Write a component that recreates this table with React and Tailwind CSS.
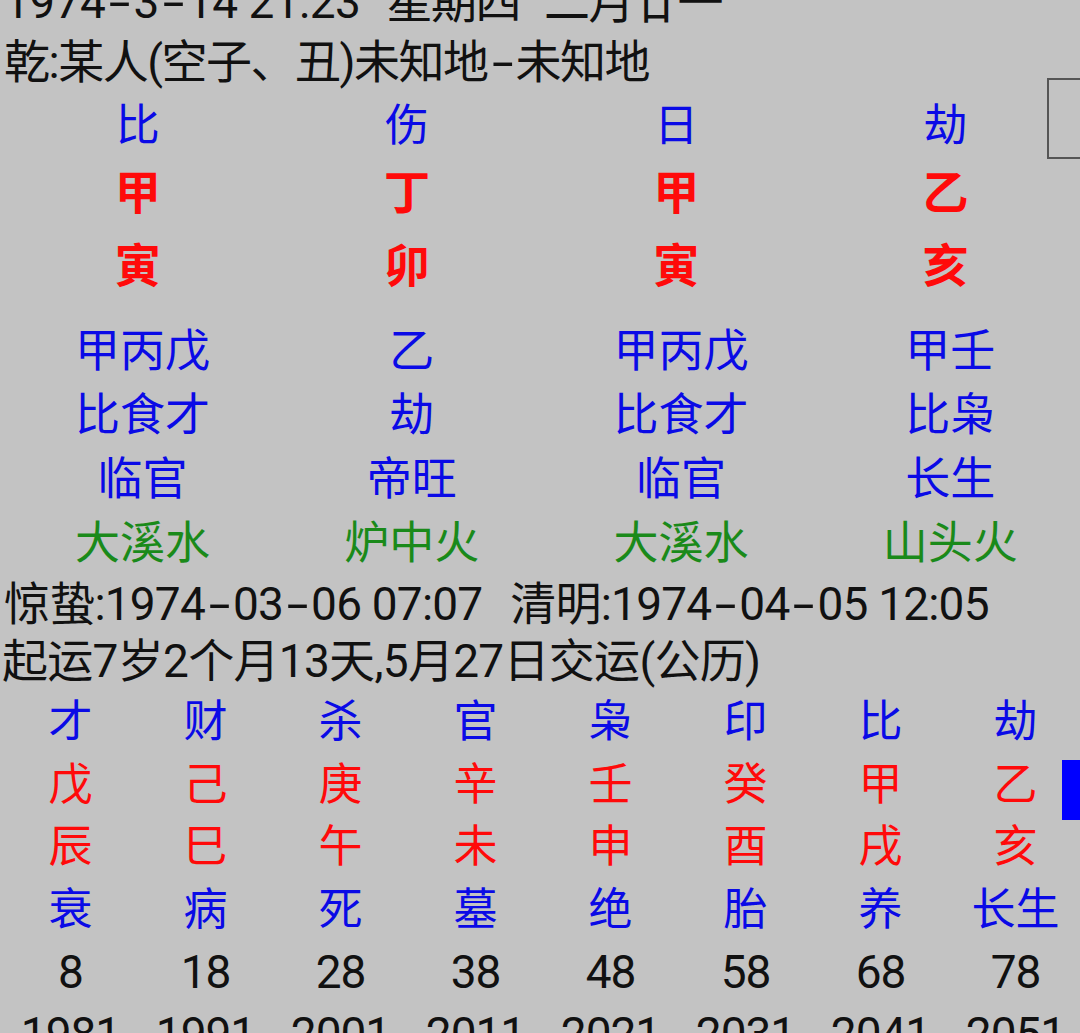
const FONT = {
  fontFamily: '"Roboto", "Noto Sans CJK SC", sans-serif',
};

const pillars = [
  { god: "比", stem: "甲", branch: "寅", hidden: "甲丙戊", hiddenGods: "比食才", stage: "临官", nayin: "大溪水" },
  { god: "伤", stem: "丁", branch: "卯", hidden: "乙", hiddenGods: "劫", stage: "帝旺", nayin: "炉中火" },
  { god: "日", stem: "甲", branch: "寅", hidden: "甲丙戊", hiddenGods: "比食才", stage: "临官", nayin: "大溪水" },
  { god: "劫", stem: "乙", branch: "亥", hidden: "甲壬", hiddenGods: "比枭", stage: "长生", nayin: "山头火" },
];

const dayun = [
  { god: "才", stem: "戊", branch: "辰", stage: "衰", age: 8, year: 1981 },
  { god: "财", stem: "己", branch: "巳", stage: "病", age: 18, year: 1991 },
  { god: "杀", stem: "庚", branch: "午", stage: "死", age: 28, year: 2001 },
  { god: "官", stem: "辛", branch: "未", stage: "墓", age: 38, year: 2011 },
  { god: "枭", stem: "壬", branch: "申", stage: "绝", age: 48, year: 2021 },
  { god: "印", stem: "癸", branch: "酉", stage: "胎", age: 58, year: 2031 },
  { god: "比", stem: "甲", branch: "戌", stage: "养", age: 68, year: 2041 },
  { god: "劫", stem: "乙", branch: "亥", stage: "长生", age: 78, year: 2051 },
];

// the app's font draws a wide dash; widen the hyphen cell
function Dashed({ text }) {
  const parts = text.split("-");
  return parts.map((p, i) => (
    <span key={i}>
      {p}
      {i < parts.length - 1 && (
        <span className="inline-block w-[28px] text-center">
          <span className="inline-block scale-x-[1.7]">-</span>
        </span>
      )}
    </span>
  ));
}

function Row4({ field, className }) {
  return (
    <div className={"grid grid-cols-4 w-[1080px] pl-[3px] " + className}>
      {pillars.map((p, i) => (
        <div key={i} className="text-center">
          {p[field]}
        </div>
      ))}
    </div>
  );
}

function Row8({ field, className }) {
  return (
    <div className={"grid grid-cols-8 w-[1083px] pl-[3px] " + className}>
      {dayun.map((d, i) => (
        <div key={i} className="text-center">
          {d[field]}
        </div>
      ))}
    </div>
  );
}

export default function App() {
  return (
    <div
      className="relative w-[1080px] h-[1033px] overflow-hidden bg-[#c3c3c3] text-[#111]"
      style={FONT}
    >
      {/* header */}
      <div className="pl-[4px] text-[46px] leading-[60px] tracking-[-1.5px] whitespace-nowrap mt-[-28px]">
        <span className="tracking-[-0.5px]">
          <Dashed text="1974-3-14 21:23" />
        </span>
        <span className="inline-block w-[26px]" />
        星期四
        <span className="inline-block w-[24px]" />
        二月廿一
      </div>
      <div className="pl-[4px] text-[46px] leading-[60px] tracking-[-1.5px] whitespace-nowrap">
        <Dashed text="乾:某人(空子、丑)未知地-未知地" />
      </div>

      {/* 四柱 */}
      <Row4 field="god" className="text-[44px] leading-[68px] text-[#0a0ae6]" />
      <Row4 field="stem" className="text-[46px] leading-[66px] font-bold text-[#ff0a0a]" />
      <Row4 field="branch" className="text-[46px] leading-[80px] font-bold text-[#ff0a0a]" />
      <div className="mt-[14px] pl-[5px]">
        <Row4 field="hidden" className="text-[45px] leading-[64px] text-[#0a0ae6]" />
        <Row4 field="hiddenGods" className="text-[45px] leading-[64px] text-[#0a0ae6]" />
        <Row4 field="stage" className="text-[45px] leading-[64px] text-[#0a0ae6]" />
        <Row4 field="nayin" className="text-[45px] leading-[64px] text-[#1a8a1a]" />
      </div>

      {/* 节气 / 起运 */}
      <div className="pl-[4px] text-[46px] leading-[56px] tracking-[-0.8px] whitespace-nowrap">
        惊蛰:<Dashed text="1974-03-06 07:07" />
        <span className="inline-block w-[28px]" />
        清明:<Dashed text="1974-04-05 12:05" />
      </div>
      <div className="pl-[2px] text-[46px] leading-[58px] tracking-[-0.7px] whitespace-nowrap">
        起运7岁2个月13天,5月27日交运(公历)
      </div>

      {/* 大运 */}
      <Row8 field="god" className="text-[44px] leading-[64px] text-[#0a0ae6]" />
      <Row8 field="stem" className="text-[44px] leading-[62px] text-[#ff0a0a]" />
      <Row8 field="branch" className="text-[44px] leading-[62px] text-[#ff0a0a]" />
      <Row8 field="stage" className="text-[44px] leading-[64px] text-[#0a0ae6]" />
      <Row8 field="age" className="text-[46px] leading-[60px] tracking-[-1px] text-[#111]" />
      <Row8 field="year" className="text-[46px] leading-[64px] tracking-[-1px] text-[#111]" />

      {/* scroll handles */}
      <div className="absolute left-[1047px] top-[78px] w-[40px] h-[81px] border-2 border-[#555]" />
      <div className="absolute left-[1062px] top-[760px] w-[20px] h-[60px] bg-[#0000ff]" />
    </div>
  );
}
